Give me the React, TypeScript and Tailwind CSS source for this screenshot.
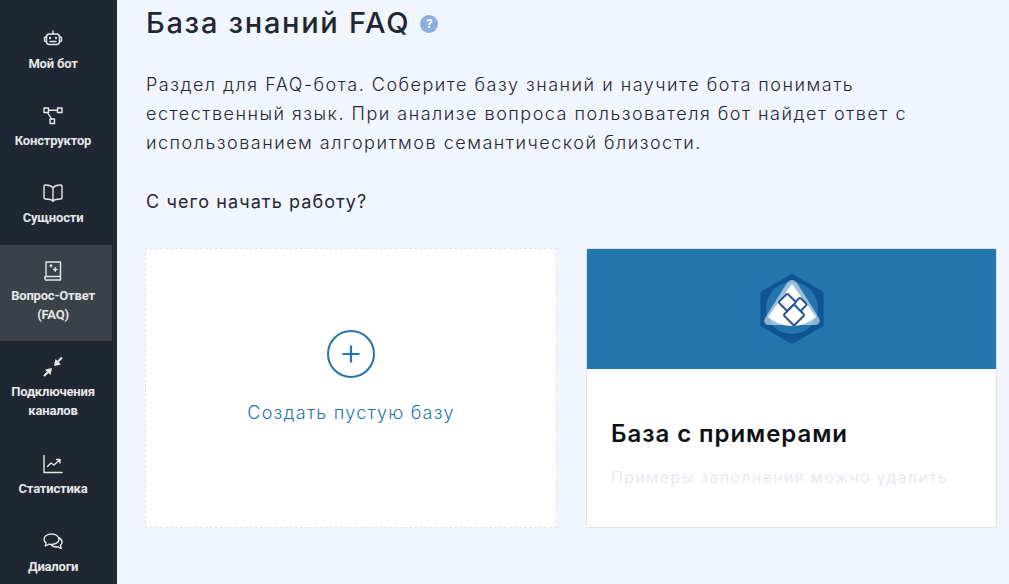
import React from "react";

const Ic = ({ children }: { children: React.ReactNode }) => (
  <svg width="22" height="22" viewBox="0 0 22 22" fill="none" stroke="currentColor" strokeWidth="1.4" strokeLinecap="round" strokeLinejoin="round">
    {children}
  </svg>
);

const items: { label: React.ReactNode; h: string; active?: boolean; icon: React.ReactNode }[] = [
  {
    label: "Мой бот",
    h: "h-[77px]",
    icon: (
      <Ic>
        <rect x="4.5" y="6" width="13" height="10.5" rx="3" />
        <path d="M11 6V3M4.500 9H3.500a1 1 0 0 0-1 1v2.500a1 1 0 0 0 1 1h1M17.500 9h1a1 1 0 0 1 1 1v2.500a1 1 0 0 1-1 1h-1M8 13.500h6" />
        <path d="M8 9.800v.4M14 9.800v.4" strokeWidth="2" />
      </Ic>
    ),
  },
  {
    label: "Конструктор",
    h: "h-[77px]",
    icon: (
      <Ic>
        <rect x="2" y="3" width="4.500" height="4.500" />
        <rect x="15.500" y="3" width="4.500" height="4.500" />
        <rect x="8" y="14" width="4.500" height="4.500" />
        <path d="M6.500 5.200h9M5.500 7.500 9.500 14" />
      </Ic>
    ),
  },
  {
    label: "Сущности",
    h: "h-[78px]",
    icon: (
      <Ic>
        <path d="M11 6C9.500 4 7 3 3.500 3c-1 0-1.500.5-1.500 1.500v11c0 1 .5 1.500 1.500 1.500 3.500 0 6 .5 7.500 2 1.500-1.500 4-2 7.500-2 1 0 1.500-.5 1.500-1.500v-11C20 3.500 19.500 3 18.500 3 15 3 12.500 4 11 6ZM11 6v13.500" />
      </Ic>
    ),
  },
  {
    label: (
      <>
        Вопрос-Ответ
        <br />
        (FAQ)
      </>
    ),
    h: "h-[96px]",
    active: true,
    icon: (
      <Ic>
        <path d="M4 16.500V2h14.500v18H5.500a1.700 1.700 0 0 1-1.500-3.500h14.500" />
        <path d="M8 5.800h2M9 4.800v2M11.500 9.500h3.500M13.250 7.700v3.600" />
      </Ic>
    ),
  },
  {
    label: (
      <>
        Подключения
        <br />
        каналов
      </>
    ),
    h: "h-[97px]",
    icon: (
      <svg width="22" height="22" viewBox="0 0 22 22" fill="none">
        <path d="M20 1.500 13.500 8M2 20l6.500-6.500" stroke="currentColor" strokeWidth="2" />
        <path d="M13.500 3 12 10l7-1.500ZM8.500 19l1.500-7-7 1.500Z" fill="currentColor" />
      </svg>
    ),
  },
  {
    label: "Статистика",
    h: "h-[78px]",
    icon: (
      <Ic>
        <path d="M2 2.500v17h18" />
        <path d="M5.500 13.500l3.500-3.500 3 2 5.500-5M14.500 6.500h3.500V10" />
      </Ic>
    ),
  },
  {
    label: "Диалоги",
    h: "h-[78px]",
    icon: (
      <Ic>
        <path d="M9.500 3c-4.200 0-7.500 2.300-7.500 5.200 0 1.500.8 2.800 2 3.700L3.300 15l3.500-1.800c.8.200 1.700.2 2.700.2 4.200 0 7.500-2.300 7.500-5.200S13.700 3 9.500 3Z" />
        <path d="M17 7c1.800.8 3 2.400 3 4.200 0 1.300-.6 2.400-1.600 3.200l.8 3.100-3.200-1.700c-2.500.5-5.300-.2-6.800-2.100" />
      </Ic>
    ),
  },
];

export default function App() {
  return (
    <div className="flex h-[584px] w-[1009px] overflow-hidden bg-[#f1f5fd] font-['Inter','Noto_Sans',sans-serif]">
      <aside className="h-full w-[117px] shrink-0 bg-[#1f2733] pt-[13px] font-['Roboto',sans-serif] text-[13px] font-bold leading-[19px] text-[#e6e8ea]">
        {items.map((it, i) => (
          <div
            key={i}
            className={`flex w-[112px] flex-col items-center pr-[6px] pt-[15px] text-center ${it.h} ${it.active ? "bg-[#3a4149]" : ""}`}
          >
            <div className="flex h-[22px] items-center justify-center">{it.icon}</div>
            <div className="mt-[4px] tracking-[-0.2px]">{it.label}</div>
          </div>
        ))}
      </aside>

      <main className="min-w-0 flex-1 pl-[28px] pr-[12px]">
        <div className="flex items-center pl-[1px] pt-[3px]">
          <h1 className="text-[29px] font-medium leading-[40px] tracking-[1.7px] text-[#1f2733]">База знаний FAQ</h1>
          <span className="ml-[10px] mt-[2px] flex h-[18px] w-[18px] items-center justify-center rounded-full bg-[#8aaedd] text-[12px] font-bold text-white">?</span>
        </div>

        <p className="mt-[27px] pl-[1px] text-[18px] font-light leading-[29px] tracking-[1.5px] text-[#1f2733]">
          Раздел для FAQ-бота. Соберите базу знаний и научите бота понимать
          <br />
          естественный язык. При анализе вопроса пользователя бот найдет ответ с
          <br />
          использованием алгоритмов семантической близости.
        </p>

        <h2 className="mt-[30px] pl-[1px] text-[18px] font-normal leading-[29px] tracking-[1.1px] text-[#1f2733]">С чего начать работу?</h2>

        <div className="mt-[32px] flex gap-[29px]">
          <div className="flex h-[280px] w-[412px] flex-col items-center border border-dashed border-[#dfe2e8] bg-white pt-[81px]">
            <div className="flex h-[48px] w-[48px] items-center justify-center rounded-full border-2 border-[#2574ae]">
              <svg width="20" height="20" viewBox="0 0 20 20" stroke="#2574ae" strokeWidth="2.200">
                <path d="M1.500 10h17M10 1.500v17" />
              </svg>
            </div>
            <div className="mt-[22px] text-[18px] font-light leading-[26px] tracking-[1.25px] text-[#2574ae]">Создать пустую базу</div>
          </div>

          <div className="h-[280px] w-[411px] overflow-hidden rounded-[2px] border border-[#dfe2e8] bg-white">
            <div className="flex h-[120px] items-center justify-center bg-[#2475ae]">
              <svg width="66" height="72" viewBox="0 0 66 72">
                <path d="M33 1 63 18a3 3 0 0 1 1.500 3v30a3 3 0 0 1-1.500 3L35 70a4 4 0 0 1-4 0L3 54a3 3 0 0 1-1.500-3V21A3 3 0 0 1 3 18Z" fill="#0d5595" />
                <circle cx="33" cy="35" r="26" fill="#2475ae" />
                <path d="M28 10c2.500-4 7.500-4 10 0l22 35c2 4 0 7-4 7H10c-4 0-6-3-4-7Z" fill="#fff" fillOpacity="0.55" />
                <path d="M33 11 57 44Q46 53 33 53 20 53 9 44Z" fill="#fff" />
                <g fill="#fff" stroke="#2c5592" strokeWidth="2" strokeLinejoin="round">
                  <rect x="36" y="26.500" width="10" height="10" rx="1.500" transform="rotate(45 41 31.500)" />
                  <rect x="22" y="23" width="12.500" height="12.500" rx="1.500" transform="rotate(45 28.250 29.250)" />
                  <rect x="27.500" y="34.500" width="15" height="15" rx="1.500" transform="rotate(45 35 42)" />
                </g>
              </svg>
            </div>
            <div className="pl-[24px] pt-[49px]">
              <div className="text-[24px] font-semibold leading-[32px] tracking-[0.95px] text-[#0e1116]">База с примерами</div>
              <div className="mt-[14px] text-[16px] font-normal leading-[26px] tracking-[1.3px] text-[#e7eaef]">Примеры заполнения можно удалить</div>
            </div>
          </div>
        </div>
      </main>
    </div>
  );
}
